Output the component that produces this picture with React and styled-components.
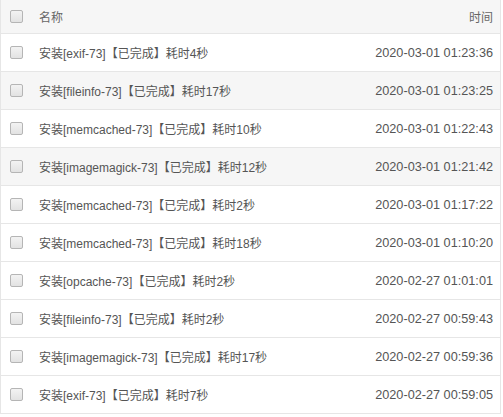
import React from 'react'
import styled, { createGlobalStyle } from 'styled-components'

const GlobalStyle = createGlobalStyle`
    body {
        margin: 0;
        background: #fff;
        font-family: "Liberation Sans", "Noto Sans CJK SC", sans-serif;
    }
`;

const Table = styled.div`
    width: 501px;
    border-left: 1px solid #e6e6e6;
    border-right: 1px solid #e6e6e6;
    border-bottom: 1px solid #e6e6e6;
    box-sizing: border-box;
    font-size: 12px;
    color: #555;
`;

const Row = styled.div`
    display: flex;
    align-items: center;
    height: ${p => (p.head ? '33px' : '37px')};
    border-bottom: ${p => (p.last ? 'none' : '1px solid #e6e6e6')};
    background: ${p => (p.head || p.shade ? '#f6f6f6' : '#fff')};
    padding: 0 7px 0 9px;
`;

const Check = styled.span`
    width: 11px;
    height: 11px;
    border: 1px solid #b5b5b5;
    border-radius: 2px;
    background: linear-gradient(#f3f3f3, #e2e2e2);
    flex: none;
`;

const Name = styled.div`
    flex: 1;
    padding-left: 16px;
    white-space: nowrap;
    color: ${p => (p.head ? '#666' : '#555')};
`;

const Time = styled.div`
    white-space: nowrap;
    font-size: ${p => (p.head ? '12px' : '12.7px')};
    color: ${p => (p.head ? '#666' : '#555')};
`;

const logs = [
    ['安装[exif-73]【已完成】耗时4秒', '2020-03-01 01:23:36'],
    ['安装[fileinfo-73]【已完成】耗时17秒', '2020-03-01 01:23:25'],
    ['安装[memcached-73]【已完成】耗时10秒', '2020-03-01 01:22:43'],
    ['安装[imagemagick-73]【已完成】耗时12秒', '2020-03-01 01:21:42'],
    ['安装[memcached-73]【已完成】耗时2秒', '2020-03-01 01:17:22'],
    ['安装[memcached-73]【已完成】耗时18秒', '2020-03-01 01:10:20'],
    ['安装[opcache-73]【已完成】耗时2秒', '2020-02-27 01:01:01'],
    ['安装[fileinfo-73]【已完成】耗时2秒', '2020-02-27 00:59:43'],
    ['安装[imagemagick-73]【已完成】耗时17秒', '2020-02-27 00:59:36'],
    ['安装[exif-73]【已完成】耗时7秒', '2020-02-27 00:59:05'],
]

const App = () => {
    return (
        <>
            <GlobalStyle />
            <Table>
                <Row head>
                    <Check />
                    <Name head>名称</Name>
                    <Time head>时间</Time>
                </Row>
                {logs.map((l, i) => (
                    <Row key={i} shade={i === 1 || i === 3} last={i === logs.length - 1}>
                        <Check />
                        <Name>{l[0]}</Name>
                        <Time>{l[1]}</Time>
                    </Row>
                ))}
            </Table>
        </>
    )
}

export default App
